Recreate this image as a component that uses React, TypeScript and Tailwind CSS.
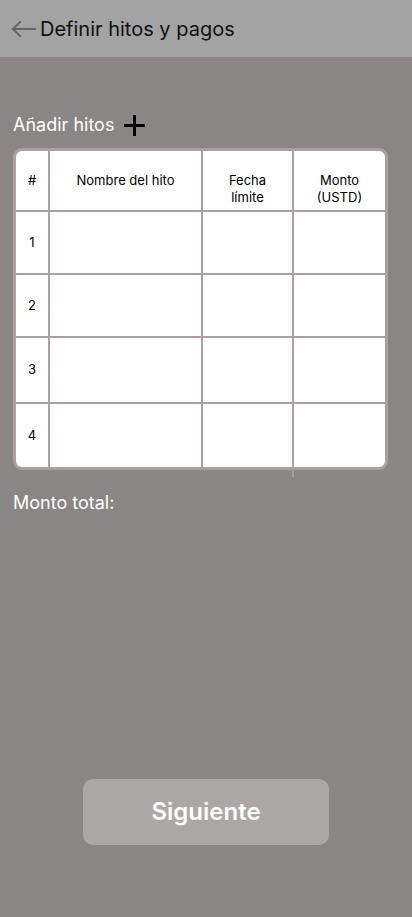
import React from 'react';

const rows = [
  { n: 1, h: 'h-[61px]' },
  { n: 2, h: 'h-[61px]' },
  { n: 3, h: 'h-[64px]' },
  { n: 4, h: 'h-[63px]' },
];

export default function App() {
  return (
    <div className="w-[412px] h-[917px] bg-[#8a8685] flex flex-col font-['Inter',sans-serif]">
      {/* Top bar */}
      <div className="h-[57px] bg-[#a3a3a3] flex items-center pl-[11px] gap-[4px] shrink-0">
        <svg width="25" height="16" viewBox="0 0 25 16" fill="none" className="mt-[1px]">
          <path d="M24 8H2M9 1L2 8l7 7" stroke="#666" strokeWidth="2" strokeLinecap="square" />
        </svg>
        <span className="text-[20px] text-[#111] leading-none">Definir hitos y pagos</span>
      </div>

      <div className="px-[13px] flex flex-col">
        {/* Add milestones */}
        <div className="flex items-center gap-[9px] mt-[57px] h-[22px]">
          <span className="text-[18px] text-white leading-none">Añadir hitos</span>
          <svg width="23" height="23" viewBox="0 0 23 23">
            <path d="M11.5 1v21M1 11.5h21" stroke="#000" strokeWidth="3" />
          </svg>
        </div>

        {/* Table */}
        <div className="mt-[12px] w-[375px] border-[3px] border-[#ab9f9f] rounded-[9px] overflow-hidden bg-[#ab9f9f]">
          <div className="grid grid-cols-[32px_151px_89px_1fr] gap-[2px] text-[13px] text-black">
            <div className="bg-white h-[59px] flex justify-center pt-[21px] leading-[17px]">#</div>
            <div className="bg-white h-[59px] flex justify-center pt-[21px] leading-[17px]">Nombre del hito</div>
            <div className="bg-white h-[59px] text-center pt-[21px] leading-[17px]">
              Fecha
              <br />
              límite
            </div>
            <div className="bg-white h-[59px] text-center pt-[21px] leading-[17px]">
              Monto
              <br />
              (USTD)
            </div>
            {rows.map((r) => (
              <React.Fragment key={r.n}>
                <div className={`bg-white ${r.h} flex items-center justify-center`}>{r.n}</div>
                <div className={`bg-white ${r.h}`} />
                <div className={`bg-white ${r.h}`} />
                <div className={`bg-white ${r.h}`} />
              </React.Fragment>
            ))}
          </div>
        </div>
        <div className="ml-[279px] w-[2px] h-[7px] bg-[#ab9f9f]" />

        <span className="mt-[17px] text-[18px] text-white leading-none">Monto total:</span>
      </div>

      {/* Next button */}
      <div className="mt-auto mb-[72px] flex justify-center">
        <button className="w-[246px] h-[66px] rounded-[10px] bg-[#aca7a7] text-white text-[24px] font-semibold">
          Siguiente
        </button>
      </div>
    </div>
  );
}
